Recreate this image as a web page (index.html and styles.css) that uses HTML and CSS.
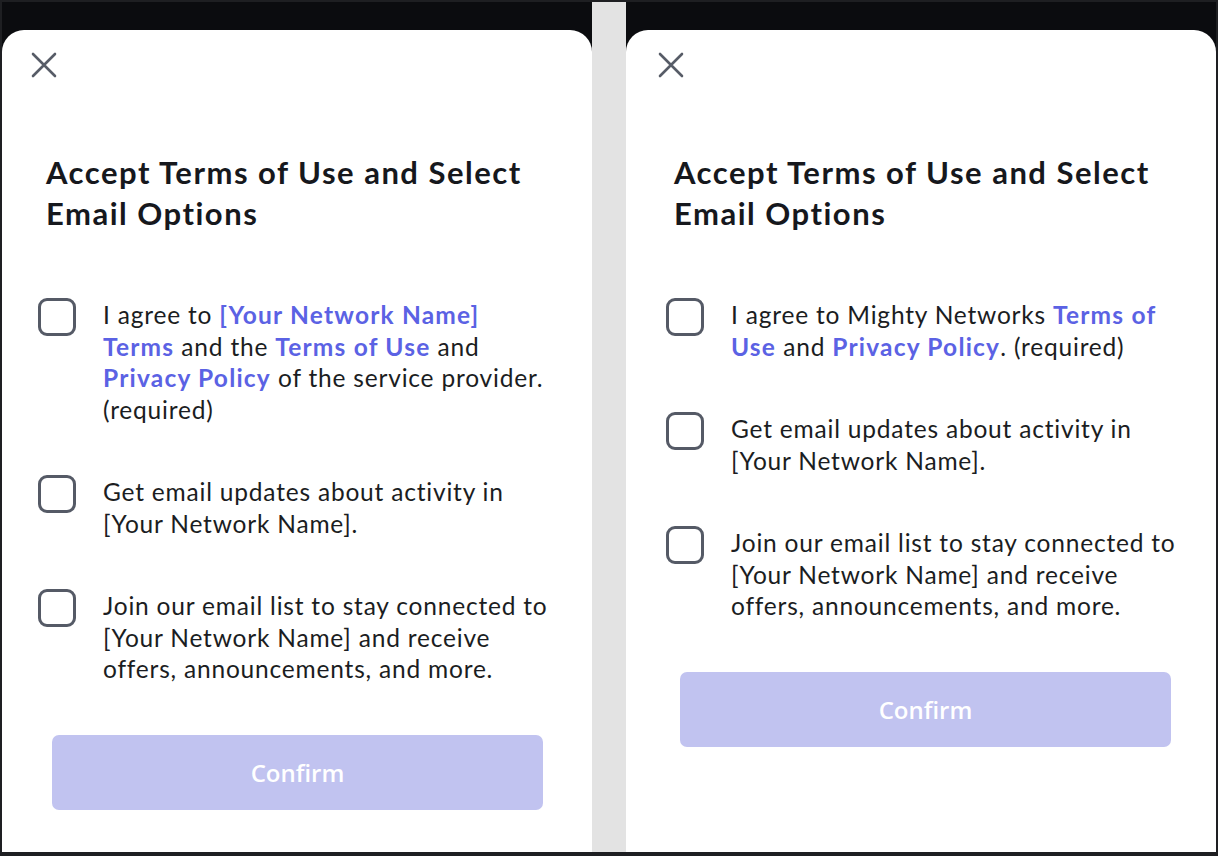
FILE: index.html
```html
<!DOCTYPE html>
<html lang="en">
<head>
<meta charset="utf-8">
<title>Accept Terms of Use</title>
<link rel="stylesheet" href="styles.css">
</head>
<body>
<div class="frame">
  <section class="panel">
    <div class="card">
      <button class="close" aria-label="Close">
        <svg viewBox="0 0 26 26" width="26" height="26"><path d="M2 2 L24 24 M24 2 L2 24" /></svg>
      </button>
      <h1 class="title">Accept Terms of Use and Select Email Options</h1>
      <ul class="options">
        <li class="option"><span class="box"></span><p class="label">I agree to <a class="link">[Your Network Name] Terms</a> and the <a class="link">Terms of Use</a> and <a class="link">Privacy Policy</a> of the service provider. (required)</p></li>
        <li class="option"><span class="box"></span><p class="label">Get email updates about activity in [Your Network Name].</p></li>
        <li class="option"><span class="box"></span><p class="label">Join our email list to stay connected to [Your Network Name] and receive offers, announcements, and more.</p></li>
      </ul>
      <button class="confirm" disabled>Confirm</button>
    </div>
  </section>
  <div class="divider"></div>
  <section class="panel panel--right">
    <div class="card">
      <button class="close" aria-label="Close">
        <svg viewBox="0 0 26 26" width="26" height="26"><path d="M2 2 L24 24 M24 2 L2 24" /></svg>
      </button>
      <h1 class="title">Accept Terms of Use and Select Email Options</h1>
      <ul class="options">
        <li class="option"><span class="box"></span><p class="label">I agree to Mighty Networks <a class="link">Terms of Use</a> and <a class="link">Privacy Policy</a>. (required)</p></li>
        <li class="option"><span class="box"></span><p class="label">Get email updates about activity in [Your Network Name].</p></li>
        <li class="option"><span class="box"></span><p class="label">Join our email list to stay connected to [Your Network Name] and receive offers, announcements, and more.</p></li>
      </ul>
      <button class="confirm" disabled>Confirm</button>
    </div>
  </section>
</div>
</body>
</html>
```
FILE: styles.css
```css
* { box-sizing: border-box; }
html, body { margin: 0; padding: 0; background: #ffffff; }
body { font-family: Lato, "Noto Sans", sans-serif; }

.frame {
  width: 1218px;
  height: 856px;
  border: 2px solid #1e1f22;
  border-bottom-width: 4px;
  display: flex;
  background: #0b0c0f;
}

.panel {
  width: 590px;
  display: flex;
  flex-direction: column;
  padding-top: 28px;
  background: #0b0c0f;
}

.divider {
  width: 34px;
  background: #e3e3e3;
}

.card {
  flex: 1;
  background: #ffffff;
  border-radius: 22px 22px 0 0;
  padding: 22px 0 0 29px;
  display: flex;
  flex-direction: column;
  align-items: flex-start;
}

.panel--right .card { padding-left: 32px; }
.panel--right .title,
.panel--right .options,
.panel--right .confirm { position: relative; left: 1px; }

.close {
  width: 26px;
  height: 26px;
  padding: 0;
  border: 0;
  background: none;
  display: block;
}
.close svg { display: block; }
.close path { stroke: #575c67; stroke-width: 2.6; stroke-linecap: round; fill: none; }

.title {
  margin: 74px 0 0 15px;
  font-size: 31px;
  line-height: 41px;
  font-weight: 700;
  letter-spacing: 1.5px;
  color: #16181d;
  width: 520px;
}

.options {
  list-style: none;
  margin: 65px 0 0 7px;
  padding: 0;
  display: flex;
  flex-direction: column;
  gap: 51px;
}

.option {
  display: flex;
  align-items: flex-start;
  gap: 27px;
}

.box {
  flex: none;
  width: 38px;
  height: 38px;
  margin-top: -1px;
  border: 3px solid #555a66;
  border-radius: 9px;
}

.label {
  margin: 0;
  width: 448px;
  font-size: 24.5px;
  line-height: 31.5px;
  letter-spacing: 0.8px;
  color: #1b1d22;
}

.link {
  color: #5b62e4;
  font-weight: 700;
  letter-spacing: 1.2px;
  text-decoration: none;
}

.confirm {
  margin: 50px 0 0 21px;
  width: 491px;
  height: 75px;
  border: 0;
  border-radius: 7px;
  background: #c1c3f0;
  color: #ffffff;
  font-family: "Open Sans", "Noto Sans", sans-serif;
  font-size: 24px;
  font-weight: 600;
}
```
